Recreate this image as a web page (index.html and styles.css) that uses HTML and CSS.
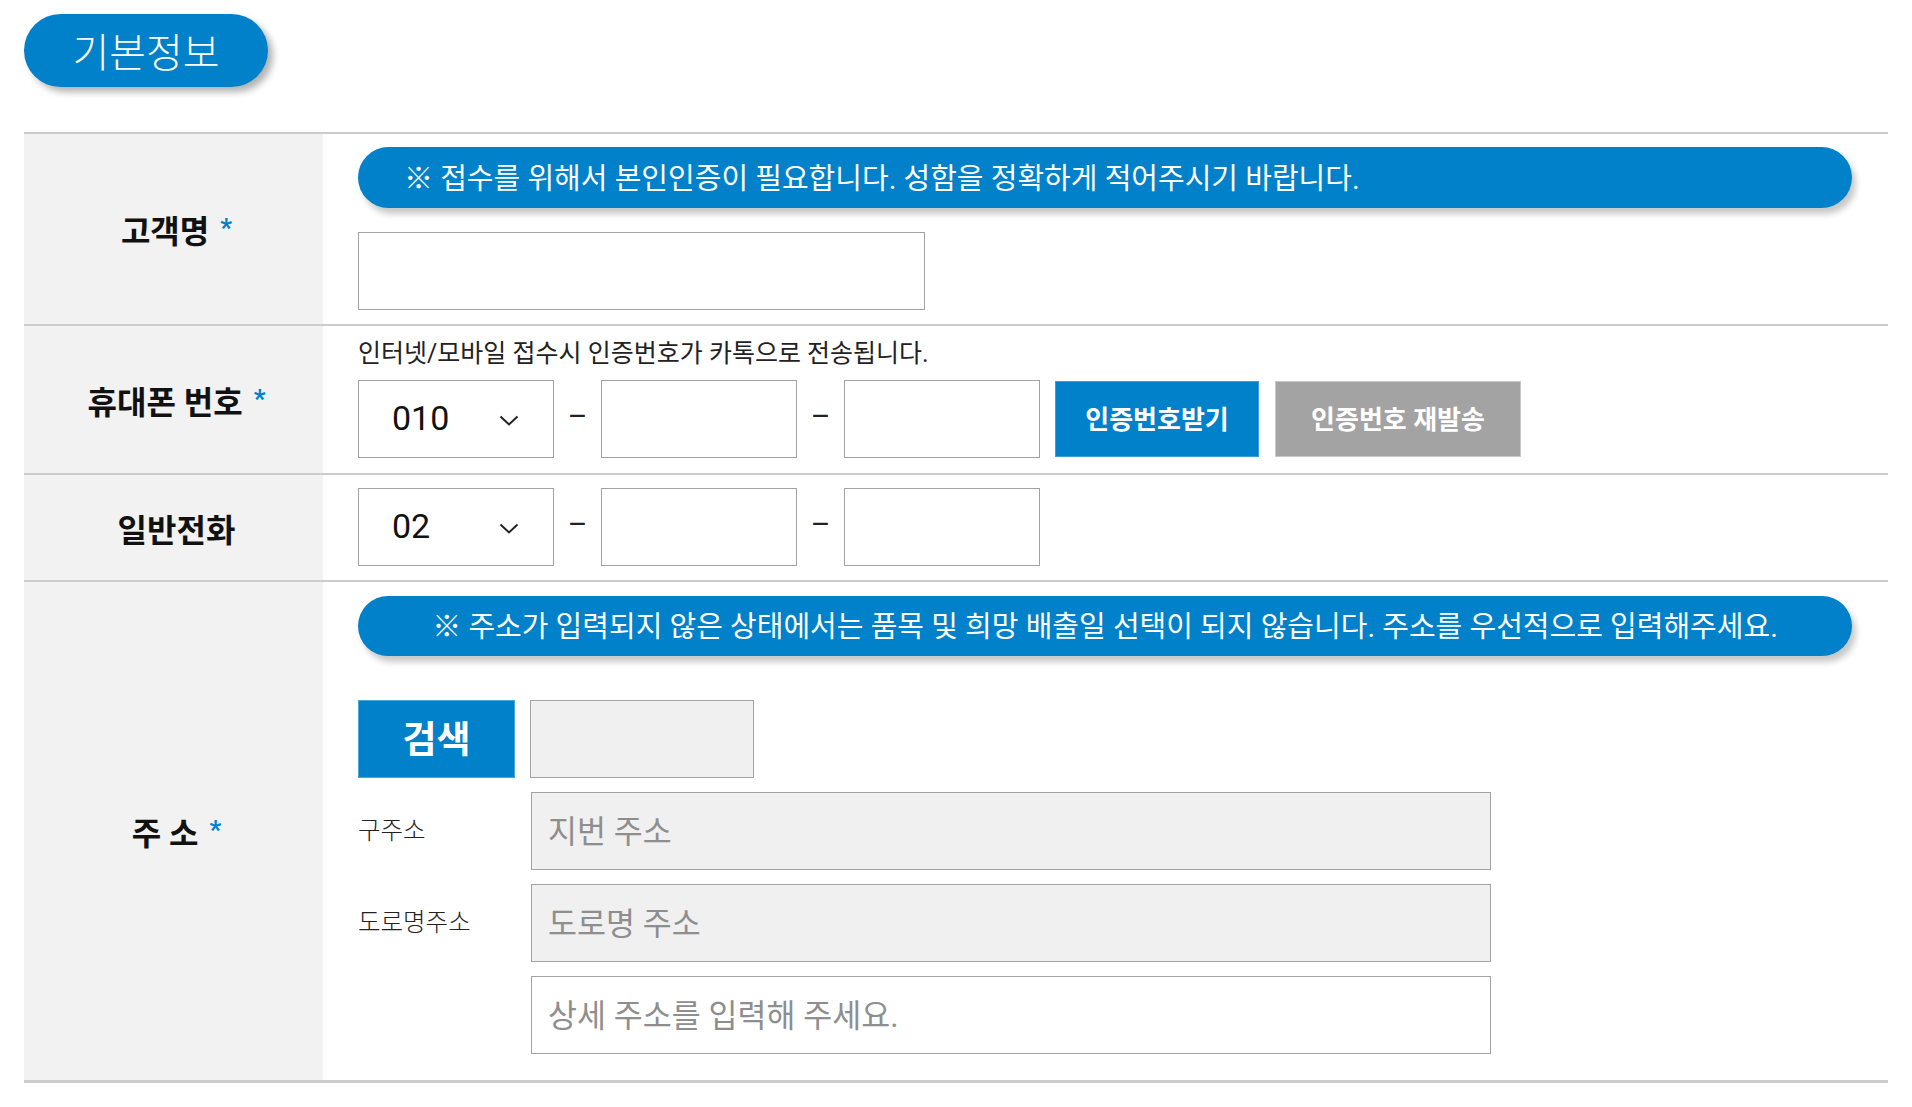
FILE: index.html
```html
<!DOCTYPE html>
<html lang="ko">
<head>
<meta charset="utf-8">
<title>기본정보</title>
<link rel="stylesheet" href="styles.css">
</head>
<body>
<div class="page">
  <h2 class="title">기본정보</h2>
  <div class="form">
    <div class="row">
      <div class="label">고객명<span class="req">*</span></div>
      <div class="field field-name">
        <div class="notice">※ 접수를 위해서 본인인증이 필요합니다. 성함을 정확하게 적어주시기 바랍니다.</div>
        <input class="box name-input" type="text">
      </div>
    </div>
    <div class="row">
      <div class="label">휴대폰 번호<span class="req">*</span></div>
      <div class="field field-mobile">
        <p class="help">인터넷/모바일 접수시 인증번호가 카톡으로 전송됩니다.</p>
        <div class="phone">
          <div class="box select"><span>010</span>
            <svg class="chev" width="20" height="11" viewBox="0 0 20 11"><polyline points="1.5,1.5 10,9.5 18.5,1.5" fill="none" stroke="#222" stroke-width="2"/></svg>
          </div>
          <span class="dash">–</span>
          <input class="box part" type="text">
          <span class="dash">–</span>
          <input class="box part" type="text">
          <button class="btn btn-blue">인증번호받기</button>
          <button class="btn btn-gray">인증번호 재발송</button>
        </div>
      </div>
    </div>
    <div class="row">
      <div class="label">일반전화</div>
      <div class="field field-tel">
        <div class="phone">
          <div class="box select"><span>02</span>
            <svg class="chev" width="20" height="11" viewBox="0 0 20 11"><polyline points="1.5,1.5 10,9.5 18.5,1.5" fill="none" stroke="#222" stroke-width="2"/></svg>
          </div>
          <span class="dash">–</span>
          <input class="box part" type="text">
          <span class="dash">–</span>
          <input class="box part" type="text">
        </div>
      </div>
    </div>
    <div class="row">
      <div class="label">주 소<span class="req">*</span></div>
      <div class="field field-addr">
        <div class="notice notice-center">※ 주소가 입력되지 않은 상태에서는 품목 및 희망 배출일 선택이 되지 않습니다. 주소를 우선적으로 입력해주세요.</div>
        <div class="search">
          <button class="btn-search">검색</button>
          <input class="box zip" type="text" readonly>
        </div>
        <div class="addr-row">
          <span class="addr-label">구주소</span>
          <input class="box addr" type="text" placeholder="지번 주소" readonly>
        </div>
        <div class="addr-row">
          <span class="addr-label">도로명주소</span>
          <input class="box addr" type="text" placeholder="도로명 주소" readonly>
        </div>
        <div class="addr-row">
          <span class="addr-label"></span>
          <input class="box addr addr-detail" type="text" placeholder="상세 주소를 입력해 주세요.">
        </div>
      </div>
    </div>
  </div>
</div>
</body>
</html>
```
FILE: styles.css
```css
* { box-sizing: border-box; }

body {
  margin: 0;
  background: #fff;
  font-family: Roboto, "Noto Sans CJK KR", sans-serif;
  color: #111;
}

.page {
  padding: 14px 24px 0 24px;
}

.title {
  margin: 0 0 45px 0;
  width: 244px;
  height: 73px;
  border-radius: 37px;
  background: #0081c9;
  color: #fff;
  font-size: 40px;
  font-weight: 300;
  display: flex;
  align-items: center;
  justify-content: center;
  padding-bottom: 2px;
  box-shadow: 5px 5px 7px rgba(0, 0, 0, 0.3);
}

.form {
  border-top: 2px solid #cccccc;
}

.row {
  display: grid;
  grid-template-columns: 299px 1fr;
  border-bottom: 2px solid #cccccc;
}

.row:last-child {
  border-bottom-width: 3px;
}

.label {
  background: #f2f2f2;
  display: flex;
  align-items: center;
  justify-content: center;
  font-size: 32px;
  font-weight: 700;
  color: #111;
  padding-left: 6px;
}

.req {
  color: #0081c9;
  font-size: 26px;
  font-weight: 700;
  margin-left: 11px;
  position: relative;
  top: -1px;
}

.field {
  padding: 13px 36px 13px 35px;
  display: flex;
  flex-direction: column;
  align-items: flex-start;
}

.field-name {
  padding-bottom: 14px;
}

.field-mobile {
  padding-bottom: 15px;
}

.field-tel {
  padding-bottom: 14px;
}

.notice {
  width: 100%;
  height: 61px;
  border-radius: 31px;
  background: #0081c9;
  color: #fff;
  font-size: 29px;
  font-weight: 400;
  display: flex;
  align-items: center;
  padding: 0 0 4px 46px;
  box-shadow: 4px 6px 6px rgba(0, 0, 0, 0.22);
  white-space: nowrap;
}

.notice-center {
  justify-content: center;
  padding-left: 0;
  height: 60px;
}

.box {
  border: 1px solid #a3a3a3;
  background: #fff;
  height: 78px;
  margin: 0;
  outline: none;
  font-family: inherit;
}

.name-input {
  width: 567px;
  margin-top: 24px;
}

.help {
  margin: 0 0 11px 0;
  font-size: 25px;
  line-height: 30px;
  color: #222;
  font-weight: 400;
}

.phone {
  display: flex;
  align-items: center;
}

.select {
  width: 196px;
  display: flex;
  align-items: center;
  justify-content: space-between;
  padding: 0 34px 2px 33px;
  font-size: 34px;
  color: #111;
}

.chev {
  display: block;
  margin-top: 4px;
}

.dash {
  width: 47px;
  text-align: center;
  font-size: 30px;
  color: #222;
  line-height: 1;
  padding-bottom: 6px;
}

.part {
  width: 196px;
}

.btn {
  height: 76px;
  border: 1px solid transparent;
  color: #fff;
  font-family: inherit;
  font-size: 26px;
  font-weight: 700;
  padding: 0 0 3px 0;
}

.btn-blue {
  width: 204px;
  margin-left: 15px;
  background: #0081c9;
  border-color: #3a9fd6;
}

.btn-gray {
  width: 246px;
  margin-left: 16px;
  background: #a3a3a3;
  border-color: #c9c9c9;
}

.field-addr {
  padding-top: 14px;
  padding-bottom: 26px;
}

.search {
  display: flex;
  margin-top: 44px;
}

.btn-search {
  width: 157px;
  height: 78px;
  background: #0081c9;
  border: 1px solid #4aa7dc;
  color: #fff;
  font-family: inherit;
  font-size: 37px;
  font-weight: 700;
  padding: 0 0 4px 0;
}

.zip {
  width: 224px;
  margin-left: 15px;
  background: #f0f0f0;
}

.addr-row {
  display: flex;
  align-items: center;
  margin-top: 14px;
}

.addr-label {
  width: 173px;
  font-size: 24.5px;
  font-weight: 300;
  color: #222;
  padding-bottom: 6px;
}

.addr {
  width: 960px;
  background: #f0f0f0;
  padding: 2px 0 0 16px;
  font-size: 31.5px;
  color: #333;
}

.addr::placeholder {
  color: #8e8e8e;
}

.addr-detail {
  background: #fff;
}
```
